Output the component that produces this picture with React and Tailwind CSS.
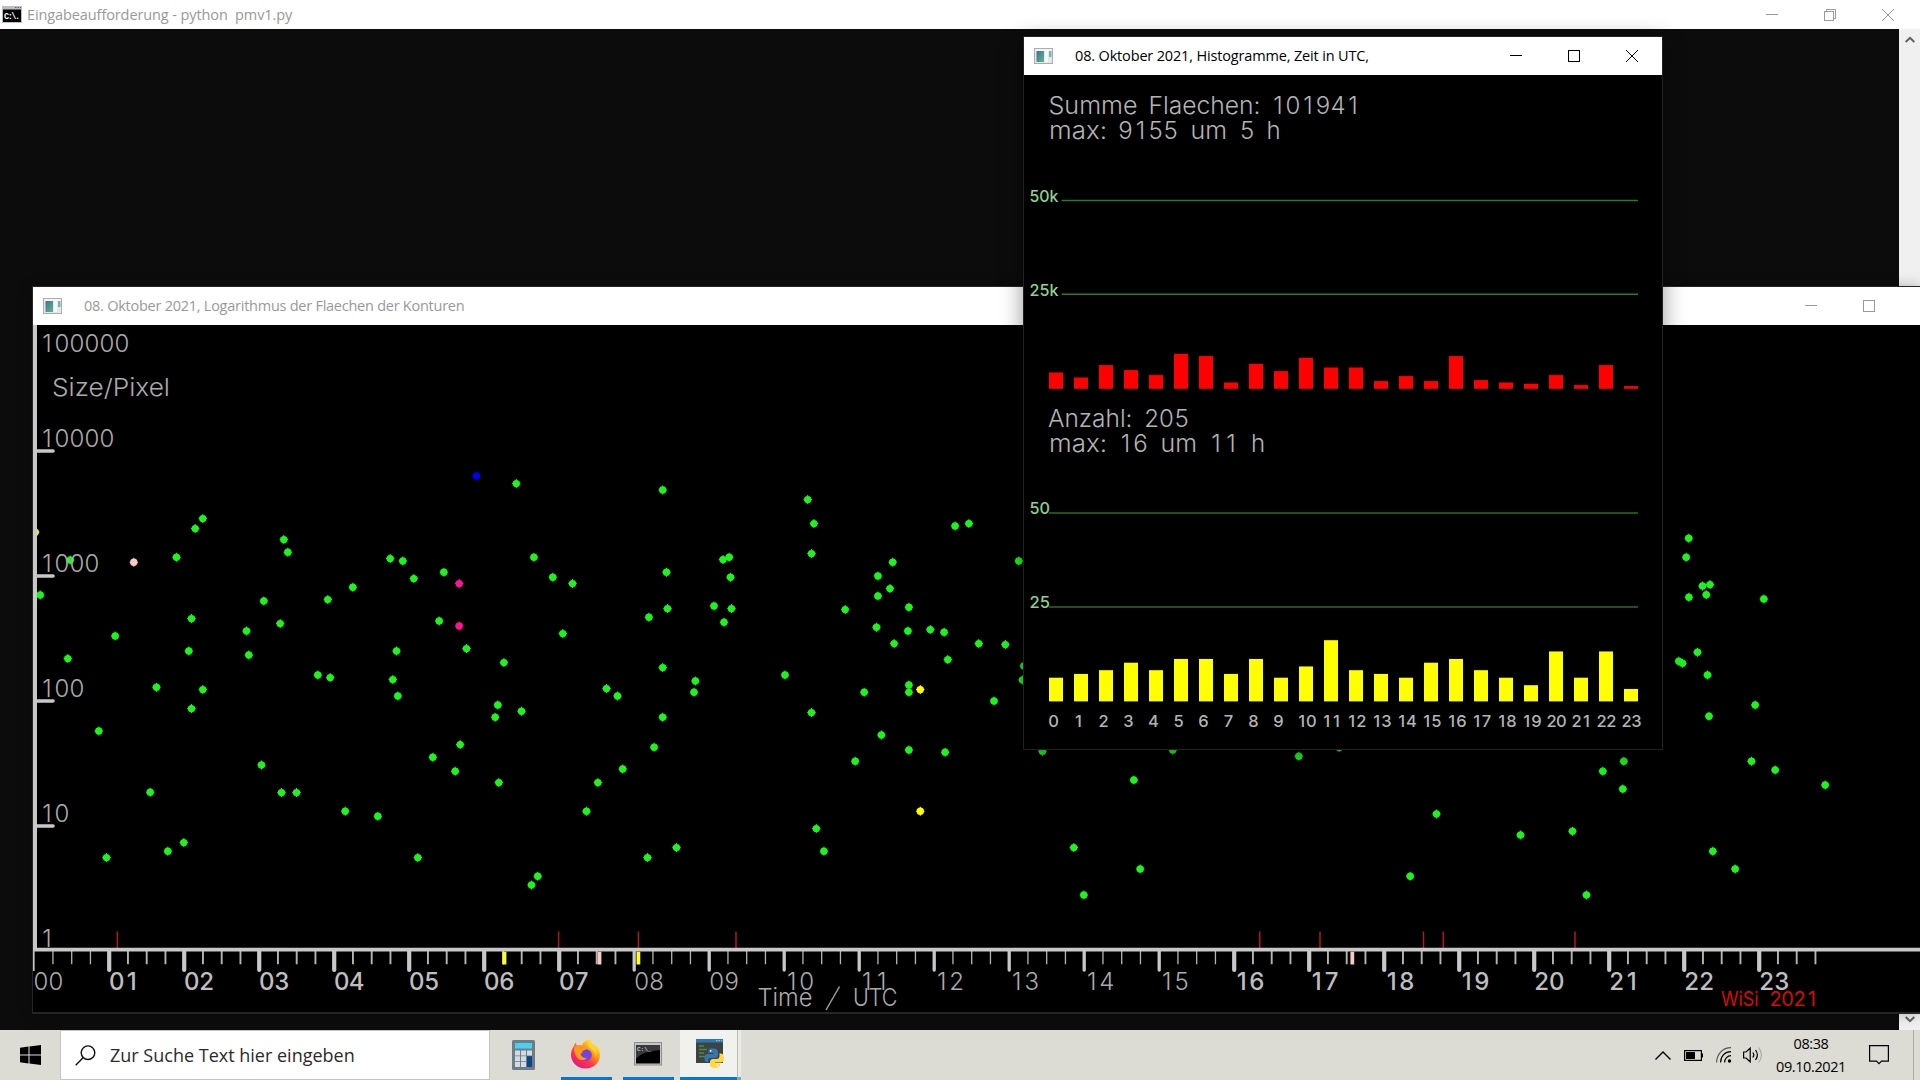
import React from "react";

const GREEN = "#1cf51c";

// points of the scatter plot, green unless a color is given
const points = [
  [476, 475.7, "#0000f0"], [202.3, 518.3], [194.7, 528.3], [176, 557], [283.3, 539.3], [287.3, 552],
  [133.3, 562, "#ffc8c8"], [69.7, 559.7], [34.7, 532, "#f0f03c"], [39.7, 594.7], [389.7, 558.3],
  [402.3, 560.7], [413.3, 578.3], [443.3, 572], [458.7, 583.3, "#ff1493"], [458.7, 625.7, "#ff1493"],
  [438.7, 620.7], [466, 648.3], [352.3, 587], [327.3, 599.3], [263.3, 600.7], [191, 618.3],
  [114.7, 635.7], [67.3, 658.3], [279.7, 623.3], [246, 630.7], [248.3, 654.7], [188.3, 650.7],
  [156, 687], [202.3, 689.3], [317.3, 674.7], [329.7, 677.3], [396, 650.7], [392.3, 679.3],
  [397.3, 695.7], [191, 708.3], [98.3, 730.7], [261, 764.7], [149.7, 792], [281, 792.3], [296, 792.3],
  [344.7, 811], [377.3, 816], [183.3, 842.3], [167.3, 851], [106, 857.3], [417.3, 857.3],
  [432.3, 757], [459.7, 744.3], [454.7, 771], [498.3, 782.3], [494.7, 717], [497.3, 704.7],
  [515.8, 483.3], [662.2, 489.7], [807.2, 499.3], [813.4, 523.3], [811, 553.3], [954.6, 525.7],
  [968.4, 523.3], [892.2, 562], [877.4, 575.7], [889.5, 588.3], [877.4, 595.7], [908.4, 607],
  [1018.3, 560.7], [533.4, 557], [552.3, 577], [572, 583.3], [666, 572], [722.5, 559.3],
  [728.7, 557], [730, 577], [713.5, 605.7], [731, 608.3], [723.5, 622], [667, 608.3], [648.4, 617],
  [562.3, 633.3], [503.4, 662.3], [662.2, 667.3], [694.9, 680.7], [693.5, 692], [784.5, 674.7],
  [606, 688.3], [617, 695.7], [521, 711], [662.2, 717], [653.6, 747], [811, 712.3], [844.7, 609.3],
  [876, 627], [907.4, 630.7], [929.8, 629.3], [943.6, 632], [893.6, 643.3], [947.3, 659.3],
  [978.3, 643.3], [1004.9, 644.3], [908.4, 684.7], [908.4, 692], [919.8, 689.3, "#ffff00"],
  [863.7, 692], [1023.4, 665.7], [1022, 679.7], [993.5, 700.7], [880.9, 734.7], [908.4, 749.7],
  [944.6, 752], [854.7, 761], [622.2, 768.7], [597.4, 782.3], [586, 811], [676, 847.3],
  [647, 857.3], [537.2, 876], [531, 884.7], [815.8, 828.3], [823.4, 851], [919.8, 811, "#ffff00"],
  [1133.3, 779.7], [1073.3, 847.3], [1083.3, 894.7], [1139.7, 868.7], [1298.3, 756],
  [1436, 813.7], [1409.7, 876], [1042, 751], [1172.3, 749.7], [1338.7, 747.3], [1623.3, 761],
  [1602.3, 771], [1622.3, 788.7], [1751, 761], [1774.7, 769.7], [1824.7, 784.7], [1520, 834.7],
  [1572, 831], [1712.3, 851], [1734.7, 868.7], [1586, 894.7], [1688.2, 538], [1685.7, 557],
  [1688.4, 597], [1702, 585.7], [1709.5, 584.3], [1705.8, 594.5], [1763.3, 598.7], [1697, 652],
  [1678.3, 661], [1682, 663], [1707, 674.7], [1754.7, 704.7], [1708.5, 716],
];

const redMarks = [117.3, 558.6, 638.4, 736, 1259.8, 1320, 1423.5, 1443.3, 1575];

const colorMarks = [
  [504.5, "#ffff1e"], [638.4, "#ffff1e"], [599.5, "#ffc8c8"], [1352.3, "#ffc8c8"],
];

const areas = [
  16.3, 11.3, 23.7, 18.7, 13.7, 35, 32.7, 6.3, 25, 17.7, 31, 21.3,
  21.3, 7.7, 12.7, 7.7, 32.7, 8.7, 6.3, 5, 13.7, 3.7, 23.7, 2.7,
];

const counts = [6, 7, 8, 10, 8, 11, 11, 7, 11, 6, 9, 16, 8, 7, 6, 10, 11, 8, 6, 4, 13, 6, 13, 3];

const hours = Array.from({ length: 24 }, (_, i) => i);

// digits on a fixed pitch, x is the center of the first one
const Digits = ({ x, y, step = 15, children, ...rest }) => (
  <text x={[...children].map((_, i) => x + i * step).join(" ")} y={y} textAnchor="middle" {...rest}>
    {children}
  </text>
);

// one word stretched between x and x2
const Word = ({ x, x2, y, children, ...rest }) => (
  <text x={x} y={y} textLength={x2 - x} lengthAdjust="spacingAndGlyphs" {...rest}>
    {children}
  </text>
);

const AppIcon = () => (
  <svg width="19" height="16" viewBox="0 0 19 16">
    <rect x="0.5" y="0.5" width="18" height="15" fill="#e4e8ea" stroke="#a9adb0" />
    <rect x="1" y="1" width="17" height="2" fill="#f4f4f4" />
    <rect x="2.5" y="3" width="7.5" height="11" fill="url(#appicon)" />
    <rect x="11" y="3" width="3" height="11" fill="#f7f7f7" />
    <rect x="15" y="3" width="2.5" height="6" fill="#7fb3a5" />
    <defs>
      <linearGradient id="appicon" x1="0" y1="0" x2="1" y2="1">
        <stop offset="0" stopColor="#3f7391" />
        <stop offset="1" stopColor="#5fb48a" />
      </linearGradient>
    </defs>
  </svg>
);

const Minimize = () => (
  <svg width="12" height="12" viewBox="0 0 12 12" stroke="currentColor">
    <path d="M0 5.5h12" />
  </svg>
);

const Maximize = () => (
  <svg width="12" height="12" viewBox="0 0 12 12" fill="none" stroke="currentColor">
    <rect x="0.5" y="0.5" width="11" height="11" />
  </svg>
);

const Restore = () => (
  <svg width="12" height="12" viewBox="0 0 12 12" fill="none" stroke="currentColor">
    <rect x="0.5" y="2.5" width="9" height="9" />
    <path d="M2.5 2.5v-2h9v9h-2" />
  </svg>
);

const Close = () => (
  <svg width="12" height="12" viewBox="0 0 12 12" fill="none" stroke="currentColor">
    <path d="M0 0L12 12M12 0L0 12" />
  </svg>
);

const WindowButton = ({ children }) => (
  <button className="flex h-full w-[58px] items-center justify-center">{children}</button>
);

const ScatterPlot = () => (
  <svg className="block" width="1887" height="687" viewBox="33 325 1887 687" fontFamily="Inter, sans-serif" fontWeight="300" fontSize="24">
    <g transform="translate(0.5 0.3)">
      {points.map(([x, y, color], i) => (
        <g key={i} fill={color || GREEN}>
          <circle cx={x} cy={y} r="3.7" />
          <path d={`M${x - 4.2} ${y - 0.5}h8.4v1h-8.4zM${x - 0.5} ${y - 4.5}h1v9h-1z`} />
        </g>
      ))}
    </g>

    {redMarks.map((x) => (
      <path key={x} d={`M${x} 931.5V948`} stroke="#b81616" strokeWidth="1.5" />
    ))}

    <g stroke="#c8c8c8">
      <path d="M35 325V949" strokeWidth="4" />
      <path d="M33 949.7H1920" strokeWidth="3.8" />
      <path d="M36 451H53M36 576H53M36 701H53M36 826H53" strokeWidth="3.6" strokeLinecap="round" />
      {hours.map((h) => (
        <React.Fragment key={h}>
          <path
            d={h === 0 ? "M33.8 950V971" : `M${34.2 + h * 75} 950V970`}
            strokeWidth={h === 0 ? 1.6 : h > 7 && h < 16 ? 3.3 : 4.2}
            strokeLinecap={h === 0 ? "butt" : "round"}
          />
          <path
            d={[1, 2, 3].map((q) => `M${34.2 + h * 75 + q * 18.75} 950V964.3`).join("")}
            strokeWidth={h === 0 || (h > 7 && h < 16) ? 1.3 : 1.9}
            strokeOpacity="0.9"
          />
        </React.Fragment>
      ))}
    </g>
    {colorMarks.map(([x, color]) => (
      <path key={x} d={`M${x} 951.7V964.5`} stroke={color} strokeWidth="3.8" />
    ))}

    <g fill="#ababab">
      <Digits x={47} y={352}>100000</Digits>
      <Digits x={47} y={447}>10000</Digits>
      <Digits x={47} y={572}>1000</Digits>
      <Digits x={47} y={697}>100</Digits>
      <Digits x={47} y={822}>10</Digits>
      <Digits x={47} y={947}>1</Digits>
      <Word x={52} x2={170} y={395.5}>Size/Pixel</Word>
      <Word x={757.5} x2={812.5} y={1006}>Time</Word>
      <path d="M826 1010L839.5 986.5" stroke="#a0a0a0" strokeWidth="1.5" />
      <Word x={853} x2={897.5} y={1006}>UTC</Word>
    </g>
    {hours.map((h) => {
      const thin = h === 0 || (h > 7 && h < 16);
      return (
        <Digits
          key={h}
          x={h === 0 ? 41 : 41.7 + h * 75}
          y={989.7}
          fill={thin ? "#ababab" : "#bebebe"}
          fontWeight={thin ? 300 : 500}
        >
          {String(h).padStart(2, "0")}
        </Digits>
      );
    })}
    <g fill="#d80a0a" fontSize="20" fontWeight="400">
      <Word x={1721} x2={1758.5} y={1005.5}>WiSi</Word>
      <Digits x={1775.5} y={1005.5} step={12.1}>2021</Digits>
    </g>
  </svg>
);

const Histogram = () => (
  <svg className="block" width="638" height="674" viewBox="1024 75 638 674" fontFamily="Inter, sans-serif" fontWeight="300" fontSize="24">
    <g fill="#b4b4b4">
      <Word x={1048.5} x2={1137.5} y={114}>Summe</Word>
      <Word x={1148.5} x2={1260.5} y={114}>Flaechen:</Word>
      <Digits x={1278} y={114}>101941</Digits>
      <Word x={1049} x2={1107} y={139}>max:</Word>
      <Digits x={1125.5} y={139}>9155</Digits>
      <Word x={1190.5} x2={1227} y={139}>um</Word>
      <Digits x={1247} y={139}>5</Digits>
      <Digits x={1273.5} y={139}>h</Digits>

      <Word x={1048} x2={1132.5} y={427}>Anzahl:</Word>
      <Digits x={1151.5} y={427}>205</Digits>
      <Word x={1049} x2={1107} y={452}>max:</Word>
      <Digits x={1125.5} y={452}>16</Digits>
      <Word x={1160.5} x2={1197} y={452}>um</Word>
      <Digits x={1216} y={452}>11</Digits>
      <Digits x={1258} y={452}>h</Digits>
    </g>

    <path d="M1061.5 200.5H1638M1061.5 294.3H1638" stroke="#2a7a2a" strokeWidth="1.4" />
    <path d="M1049 513H1638M1049 607H1638" stroke="#2a6c2a" strokeWidth="1.6" />
    <g fill="#8cd28c" fontSize="16.5" fontWeight="500">
      <Word x={1029.5} x2={1058.5} y={201.5}>50k</Word>
      <Word x={1029.5} x2={1058.5} y={295.5}>25k</Word>
      <Word x={1029.5} x2={1050} y={514}>50</Word>
      <Word x={1029.5} x2={1050} y={608}>25</Word>
    </g>

    {areas.map((a, h) => (
      <rect key={h} x={1049 + h * 25} y={388.8 - a} width="14" height={a} fill="#ff0000" />
    ))}
    {counts.map((c, h) => (
      <rect key={h} x={1049 + h * 25} y={700.2 - c * 3.75} width="14" height={c * 3.75 + 1.2} fill="#ffff00" />
    ))}

    {hours.map((h) => (
      <Digits key={h} x={(h < 10 ? 1053.5 : 1051.7) + h * 25} y={726.5} step={9.7} fill="#b4b4b4" fontSize="16.5" fontWeight="500">
        {String(h)}
      </Digits>
    ))}
  </svg>
);

const ConsoleWindow = () => (
  <div className="absolute inset-x-0 top-0 flex h-[1030px] flex-col bg-[#0c0c0c]">
    <div className="flex h-[29px] shrink-0 items-center bg-white pl-0.5 text-[#999999]">
      <svg width="20" height="17" viewBox="0 0 20 17">
        <rect width="20" height="17" fill="#b8bec4" />
        <rect x="1" y="3.5" width="18" height="12.5" fill="#000" />
        <path d="M13 1.5h1.5M15.5 1.5H17M18 1.5h1" stroke="#667" />
        <text x="2" y="13" fill="#fff" fontFamily="Liberation Mono, monospace" fontWeight="700" fontSize="8.5" textLength="16">C:\.</text>
      </svg>
      <span className="ml-[5px] flex-1 font-['Open_Sans'] text-[14.5px] tracking-[-0.1px] whitespace-pre">Eingabeaufforderung - python  pmv1.py</span>
      <WindowButton><Minimize /></WindowButton>
      <WindowButton><Restore /></WindowButton>
      <WindowButton><Close /></WindowButton>
      <div className="w-[3px]" />
    </div>
    <div className="flex flex-1 justify-end">
      <div className="flex w-[21px] flex-col items-center justify-between bg-[#f0f0f0] pt-[7px] pb-[7px]">
        <svg width="10" height="8" viewBox="0 0 10 8" fill="none" stroke="#606060" strokeWidth="2">
          <path d="M0.7 6L5 1.8L9.3 6" />
        </svg>
        <svg width="10" height="8" viewBox="0 0 10 8" fill="none" stroke="#606060" strokeWidth="2">
          <path d="M0.7 2L5 6.2L9.3 2" />
        </svg>
      </div>
    </div>
  </div>
);

const ScatterWindow = () => (
  <div className="absolute top-[287px] left-[33px] h-[726px] w-[1887px] overflow-hidden border-b border-[#262626] bg-black shadow-[0_0_0_1px_#262626,0_0_14px_rgba(0,0,0,0.3)]">
    <div className="flex h-[38px] items-center bg-white pl-2.5 text-[#999999]">
      <AppIcon />
      <span className="ml-[22px] flex-1 font-['Open_Sans'] text-[14.5px] tracking-[-0.25px]">08. Oktober 2021, Logarithmus der Flaechen der Konturen</span>
      <WindowButton><Minimize /></WindowButton>
      <WindowButton><Maximize /></WindowButton>
      <div className="w-[22px]" />
    </div>
    <ScatterPlot />
  </div>
);

const HistogramWindow = () => (
  <div className="absolute top-[37px] left-[1024px] h-[712px] w-[638px] bg-black shadow-[0_0_0_1px_#222222,0_4px_22px_rgba(0,0,0,0.45)]">
    <div className="flex h-[38px] items-center bg-white pr-px pl-2.5 text-black">
      <AppIcon />
      <span className="ml-[22px] flex-1 font-['Open_Sans'] text-[14.5px] tracking-[-0.16px]">08. Oktober 2021, Histogramme, Zeit in UTC,</span>
      <WindowButton><Minimize /></WindowButton>
      <WindowButton><Maximize /></WindowButton>
      <WindowButton><Close /></WindowButton>
    </div>
    <Histogram />
  </div>
);

const CalculatorIcon = () => (
  <svg width="23" height="30" viewBox="0 0 23 30">
    <rect width="23" height="30" rx="1.5" fill="#6e7c87" />
    <rect x="3" y="3" width="17" height="5.5" fill="#46d2f5" />
    {[10.5, 16.2, 22].map((y) => (
      <path key={y} d={`M3 ${y}h5v5h-5zM9 ${y}h5v5h-5z`} fill="#d2dbe4" />
    ))}
    <rect x="15" y="10.5" width="5" height="5" fill="#d2dbe4" />
    <rect x="15" y="16.2" width="5" height="10.8" fill="#0f4482" />
  </svg>
);

const FirefoxIcon = () => (
  <svg width="29" height="30" viewBox="0 0 29 30">
    <defs>
      <linearGradient id="ffbody" x1="0.85" y1="0.1" x2="0.2" y2="0.95">
        <stop offset="0" stopColor="#fff44f" />
        <stop offset="0.35" stopColor="#ff980e" />
        <stop offset="0.65" stopColor="#ff3647" />
        <stop offset="1" stopColor="#e31587" />
      </linearGradient>
    </defs>
    <path d="M19 0c0 3 2 4 4 6.5c1-.2 1.3-.7 1.3-1.5c3 3 4.7 6.5 4.7 11C29 24 22.500 29.500 14.500 29.500S0 23.500 0 16c0-4 1.500-7 3-9c.2-1.500.7-2.500 1.500-3.300L6 6.500c1.500-.7 3.500-.7 5 0c1-3 4-6 8-6.500z" fill="url(#ffbody)" />
    <circle cx="15" cy="16" r="5.8" fill="#7542e5" />
    <path d="M3 8c3-1.500 6-1 8 .5c2 0 4 0 4.500 1c-.5 1.500-3 1.500-4 2.500c0 1.500-.5 2-2 3c1 3 3.500 4.500 6.500 3.700c-2 3-7 3.300-10-.2c-2.500-3-3-7-3-10.500z" fill="#ff9a1f" />
    <path d="M19 0c0 3 2 4 4 6.5c2.500 3.500 3.500 8 1.500 12c0-3.500-1-6.500-4.500-8.500c-3-2-4-6.500-1-10z" fill="#ffd42e" />
  </svg>
);

const TerminalIcon = () => (
  <svg width="28" height="24" viewBox="0 0 28 24">
    <rect x="0.5" y="0.5" width="27" height="22.5" fill="#c3c7ca" stroke="#8b8f93" />
    <rect x="2" y="3" width="24" height="18.5" fill="#000" />
    <path d="M2 3h24v5C14 9 7 11 2 17z" fill="#3a3a3a" />
    <text x="3" y="9" fill="#eee" fontFamily="Liberation Mono, monospace" fontSize="6">C:\_</text>
  </svg>
);

const PythonIcon = () => (
  <svg width="28" height="29" viewBox="0 0 28 29">
    <rect width="27" height="24" fill="#3d4245" />
    <rect width="27" height="3.5" fill="#2f76ad" />
    <path d="M20 1.7h1.5M22.5 1.7H24M25 1.7h1" stroke="#9fd0f0" />
    <path d="M3 7h5M3 10.5h8M3 14h5M3 17.5h7" stroke="#4e8a48" strokeWidth="1.4" />
    <path d="M14 9.500h4q4 0 4 3.500v3q0 3-3 3h-4q-3 0-3 3v1h-1q-2.500 0-2.500-4t3-4h6v-1h-5v-2q0-2.500 1.500-2.500z" fill="#3776ab" />
    <path d="M23.500 14.500h1q3.500 0 3.500 4.500t-3.500 4.500H19v1h5v1.500q0 3-5 3t-5-3V23q0-3 3-3h3.500q3 0 3-3z" fill="#ffd845" />
    <circle cx="14.7" cy="11.8" r="0.9" fill="#fff" />
    <circle cx="21.5" cy="26.6" r="0.9" fill="#fff" />
  </svg>
);

const Taskbar = () => (
  <div className="absolute inset-x-0 top-[1030px] flex h-[50px] items-stretch bg-[#dcdcd5]">
    <div className="flex w-[60px] items-center justify-center">
      <svg width="21" height="20" viewBox="0 0 21 20" fill="#000">
        <path d="M0 2.8L8.5 1.6V9.5H0zM9.5 1.5L21 0V9.5H9.5zM0 10.5H8.5V18.4L0 17.2zM9.5 10.5H21V20L9.5 18.5z" />
      </svg>
    </div>
    <div className="flex w-[430px] items-center border border-[#c4c4c4] bg-white pl-[14px]">
      <svg width="21" height="21" viewBox="0 0 21 21" fill="none" stroke="#111" strokeWidth="1.4">
        <circle cx="13" cy="7.7" r="6.8" />
        <path d="M8.3 12.5L0.7 20.3" />
      </svg>
      <span className="ml-[14px] font-['Open_Sans'] text-[18px] text-[#2b2b2b]">Zur Suche Text hier eingeben</span>
    </div>
    <div className="ml-[3px] flex w-[62px] items-center justify-center pr-0.5"><CalculatorIcon /></div>
    <div className="ml-1.5 flex w-[51px] items-center justify-center border-b-[3px] border-[#0078d7] pr-0.5"><FirefoxIcon /></div>
    <div className="ml-[11px] flex w-[51px] items-center justify-center border-b-[3px] border-[#0078d7] pr-0.5"><TerminalIcon /></div>
    <div className="ml-1.5 flex w-[57px] items-center justify-center border-b-[3px] border-[#0078d7] bg-[#f1f1ee] pl-[3px]"><PythonIcon /></div>
    <div className="w-[4px] border-b-[3px] border-l border-b-[#6ba9da] border-l-[#b9b9b4] bg-[#eaeae6]" />
    <div className="flex flex-1 items-center justify-end pr-[6px] text-black">
      <svg width="16" height="9" viewBox="0 0 16 9" fill="none" stroke="#000" strokeWidth="1.4">
        <path d="M0.5 8.5L8 1L15.5 8.5" />
      </svg>
      <svg className="ml-[13px]" width="19" height="11" viewBox="0 0 19 11">
        <rect x="0.6" y="0.6" width="16.8" height="9.8" fill="none" stroke="#000" strokeWidth="1.2" />
        <rect x="2" y="2" width="9" height="7" fill="#000" />
        <rect x="17.5" y="3.5" width="1.5" height="4" fill="#000" />
      </svg>
      <svg className="ml-[13px]" width="16" height="16" viewBox="0 0 16 16" fill="none" stroke="#000" strokeWidth="1.2">
        <path d="M0.6 15.5C0.6 7 7 0.7 15 0.7" stroke="#555" />
        <path d="M4.6 15.5C4.6 9 9 4.7 15 4.7" />
        <path d="M8.6 15.5C8.6 11.5 11.5 8.7 15 8.7" />
        <circle cx="13.5" cy="14" r="1.7" fill="#000" stroke="none" />
      </svg>
      <svg className="ml-[11px]" width="20" height="18" viewBox="0 0 20 18" fill="none" stroke="#000" strokeWidth="1.2">
        <path d="M0.6 6H3L7.2 2.2V15.8L3 12H0.6z" />
        <path d="M9.8 6.5q2 2.500 0 5" />
        <path d="M12.5 4q3.800 5 0 10" />
        <path d="M15.500 1.500q6 7.500 0 15" stroke="#aaa" />
      </svg>
      <div className="ml-[13px] flex w-[70px] flex-col items-center font-['Open_Sans'] text-[14.5px] leading-[23px] tracking-[-0.4px] whitespace-nowrap">
        <span>08:38</span>
        <span>09.10.2021</span>
      </div>
      <svg className="ml-[23px]" width="20" height="20" viewBox="0 0 20 20" fill="none" stroke="#000" strokeWidth="1.2">
        <path d="M0.6 0.6H19.4V16.2H12.5L10 18.7L7.5 16.2H0.6z" />
      </svg>
      <div className="ml-[24px] h-full w-px bg-[#acaca6]" />
    </div>
  </div>
);

const App = () => {
  return (
    <div className="relative h-[1080px] w-[1920px] overflow-hidden bg-[#0c0c0c]">
      <ConsoleWindow />
      <ScatterWindow />
      <HistogramWindow />
      <Taskbar />
    </div>
  );
};

export default App;
